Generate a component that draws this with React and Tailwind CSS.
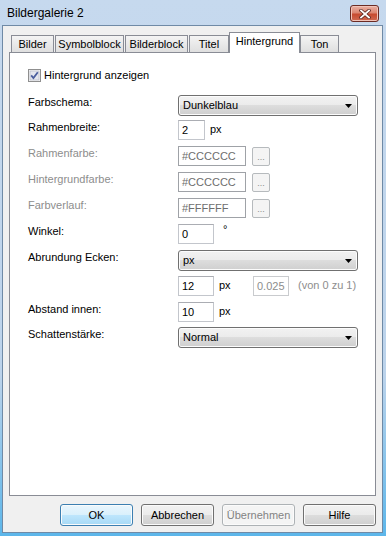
const font = { fontFamily: '"Liberation Sans", Arial, sans-serif' };

const Arrow = () => (
  <svg width="7" height="4" viewBox="0 0 7 4" className="absolute right-[5px] top-1/2 -translate-y-1/2">
    <path d="M0 0h7L3.5 4z" fill="#000" />
  </svg>
);

const Select = ({ value }) => (
  <div className="relative flex h-[21px] w-[180px] items-center rounded-[3px] border border-[#707070] bg-[linear-gradient(#f2f2f2,#ebebeb_50%,#dddddd_50%,#cfcfcf)] pl-[4px] shadow-[inset_0_0_0_1px_#fcfcfc] text-[11px] text-black">
    {value}
    <Arrow />
  </div>
);

const Input = ({ value, w, dim }) => (
  <div
    className={`flex h-[20px] items-center border bg-white pl-[3px] text-[11px] ${w} ${
      dim
        ? "border-[#c9cbce] text-[#8d8d8d]"
        : "border-[#c3c6cc] border-t-[#abadb3] text-black"
    }`}
  >
    {value}
  </div>
);

const ColorInput = ({ value }) => (
  <div className="flex h-[20px] w-[68px] items-center border border-[#9fa2a7] bg-white pl-[3px] text-[11px] text-[#6d6d6d]">
    {value}
  </div>
);

const DotsButton = () => (
  <div className="ml-[6px] mt-px flex h-[19px] w-[18px] items-end justify-center rounded-[2px] border border-[#b6babd] bg-[#f4f4f4] pb-[3px] text-[9px] leading-none text-[#8d8d8d]">
    ...
  </div>
);

const Row = ({ mt, label, dim, children }) => (
  <div className={`flex items-start ${mt}`}>
    <div className={`w-[150px] pt-px text-[11px] leading-[13px] ${dim ? "text-[#8d8d8d]" : "text-black"}`}>
      {label}
    </div>
    {children}
  </div>
);

const Tab = ({ label, w, active }) =>
  active ? (
    <div className={`flex h-[21px] ${w} items-center justify-center border border-b-0 border-[#898c95] bg-white pb-[3px] text-[11px] text-black`}>
      {label}
    </div>
  ) : (
    <div className={`flex h-[18px] ${w} items-center justify-center border border-[#898c95] bg-[linear-gradient(#f4f4f4,#e9e9e9_50%,#dfdfdf)] text-[11px] text-black`}>
      {label}
    </div>
  );

const Button = ({ label, kind }) => {
  const styles = {
    default:
      "border-[#3c7fb1] bg-[linear-gradient(#eaf6fd,#d9f0fc_50%,#bee6fd_50%,#a7d9f5)] text-black",
    normal:
      "border-[#707070] bg-[linear-gradient(#f2f2f2,#ebebeb_50%,#dddddd_50%,#cfcfcf)] text-black",
    disabled: "border-[#adb2b5] bg-[#f4f4f4] text-[#838383]",
  };
  return (
    <div
      className={`flex h-[22px] w-[73px] items-center justify-center rounded-[3px] border text-[11px] shadow-[inset_0_0_0_1px_#fbfbfb] ${styles[kind]}`}
    >
      {label}
    </div>
  );
};

const Checkbox = () => (
  <svg width="13" height="13" viewBox="0 0 13 13">
    <rect x="0.5" y="0.5" width="12" height="12" fill="#f4f4f4" stroke="#8f8f8f" />
    <rect x="2" y="2" width="9" height="9" fill="#e3e6ee" stroke="#aeb3c0" strokeWidth="0.6" />
    <path d="M3.2 6.4 L5.4 9 L9.8 3.2" fill="none" stroke="#4a5e9e" strokeWidth="1.8" />
  </svg>
);

const CloseButton = () => (
  <div className="flex h-[17px] w-[29px] items-center justify-center rounded-[3px] border border-[#6b2b24] bg-[linear-gradient(#eab0a3,#dc8672_45%,#c74a30_55%,#d06a52)] shadow-[inset_0_0_0_1px_#f1c3b8]">
    <svg width="12" height="10" viewBox="0 0 12 10">
      <path d="M2 1.5 L10 8.5 M10 1.5 L2 8.5" stroke="#5a2620" strokeWidth="3.4" strokeLinecap="square" />
      <path d="M2 1.5 L10 8.5 M10 1.5 L2 8.5" stroke="#ffffff" strokeWidth="1.8" strokeLinecap="square" />
    </svg>
  </div>
);

export default function App() {
  return (
    <div
      style={font}
      className="flex h-[536px] w-[386px] flex-col bg-[linear-gradient(#c6d9ee,#bcd3eb_70%,#5cb6ea)] pb-[3px] pl-[2px] pr-[3px]"
    >
      {/* title bar */}
      <div className="flex h-[25px] shrink-0 items-start justify-between pl-[5px] pr-[4px]">
        <div className="pt-[6px] text-[12px] leading-[14px] text-black">Bildergalerie 2</div>
        <div className="pt-[5px]">
          <CloseButton />
        </div>
      </div>

      {/* client area */}
      <div className="flex flex-1 flex-col border border-[#6f8aa6] bg-[#f0f0f0] px-[6px] pb-[6px] pt-[6px]">
        <div className="relative z-10 ml-[2px] flex h-[21px] items-end gap-px">
          <Tab label="Bilder" w="w-[43px]" />
          <Tab label="Symbolblock" w="w-[69px]" />
          <Tab label="Bilderblock" w="w-[63px]" />
          <Tab label="Titel" w="w-[40px]" />
          <div className="-ml-px flex items-end">
            <Tab label="Hintergrund" w="w-[71px]" active />
            <Tab label="Ton" w="w-[39px]" />
          </div>
        </div>

        <div className="-mt-px h-[444px] border border-[#898c95] bg-white pl-[18px]">
          <div className="mt-[16px] flex h-[13px] items-center gap-[3px] text-[11px] text-black">
            <Checkbox />
            <span>Hintergrund anzeigen</span>
          </div>

          <Row mt="mt-[13px]" label="Farbschema:">
            <Select value="Dunkelblau" />
          </Row>

          <Row mt="mt-[4px]" label="Rahmenbreite:">
            <Input value="2" w="w-[27px]" />
            <span className="ml-[5px] pt-[3px] text-[11px] leading-[13px]">px</span>
          </Row>

          <Row mt="mt-[6px]" label="Rahmenfarbe:" dim>
            <ColorInput value="#CCCCCC" />
            <DotsButton />
          </Row>

          <Row mt="mt-[6px]" label="Hintergrundfarbe:" dim>
            <ColorInput value="#CCCCCC" />
            <DotsButton />
          </Row>

          <Row mt="mt-[6px]" label="Farbverlauf:" dim>
            <ColorInput value="#FFFFFF" />
            <DotsButton />
          </Row>

          <Row mt="mt-[6px]" label="Winkel:">
            <Input value="0" w="w-[36px]" />
            <span className="ml-[9px] text-[11px] leading-[11px]">°</span>
          </Row>

          <Row mt="mt-[6px]" label="Abrundung Ecken:">
            <Select value="px" />
          </Row>

          <Row mt="mt-[5px]" label="">
            <Input value="12" w="w-[36px]" />
            <span className="ml-[5px] w-[34px] pt-[3px] text-[11px] leading-[13px]">px</span>
            <Input value="0.025" w="w-[36px]" dim />
            <span className="ml-[9px] pt-[3px] text-[11px] leading-[13px] text-[#8d8d8d]">(von 0 zu 1)</span>
          </Row>

          <Row mt="mt-[6px]" label="Abstand innen:">
            <Input value="10" w="w-[36px]" />
            <span className="ml-[5px] pt-[3px] text-[11px] leading-[13px]">px</span>
          </Row>

          <Row mt="mt-[5px]" label="Schattenstärke:">
            <Select value="Normal" />
          </Row>
        </div>

        <div className="mt-[8px] flex justify-end gap-[8px]">
          <Button label="OK" kind="default" />
          <Button label="Abbrechen" kind="normal" />
          <Button label="Übernehmen" kind="disabled" />
          <Button label="Hilfe" kind="normal" />
        </div>
      </div>
    </div>
  );
}
